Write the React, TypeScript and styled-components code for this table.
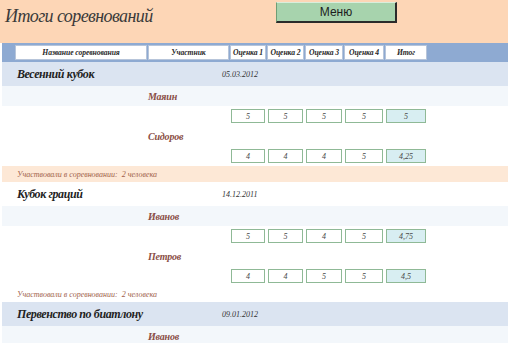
import React from "react";
import styled, { createGlobalStyle } from "styled-components";

const Global = createGlobalStyle`
  html, body { margin: 0; padding: 0; overflow: hidden; background: #ffffff; }
  body { font-family: "Liberation Serif", "Times New Roman", serif; }
`;

const COLS = "132px 81px 36px 37px 38px 40px 42px";
const SERIF = `"Liberation Serif", "Times New Roman", serif`;

const Page = styled.div`
  width: 508px;
  height: 343px;
  overflow: hidden;
  font-family: ${SERIF};
`;

const TitleBar = styled.div`
  height: 43px;
  background: #fdd6b6;
  display: flex;
  align-items: flex-start;
`;

const Title = styled.h1`
  margin: 0;
  width: 271px;
  padding: 4px 0 0 5px;
  font-family: ${SERIF};
  font-style: italic;
  font-weight: normal;
  font-size: 18px;
  letter-spacing: -0.6px;
  line-height: 24px;
  color: #3a3a3a;
`;

const MenuButton = styled.button`
  margin-top: 2px;
  width: 121px;
  height: 21px;
  padding: 0;
  background: #a7d3ad;
  border-style: solid;
  border-width: 1px 2px 2px 1px;
  border-color: #d9eedc #2b2b2b #2b2b2b #6f9d75;
  font-family: "Liberation Sans", Arial, sans-serif;
  font-size: 12px;
  color: #1e1e1e;
`;

const HeaderBar = styled.div`
  margin-left: 2px;
  height: 19px;
  box-sizing: border-box;
  padding: 2px 0 2px 13px;
  background: #8eaad2;
  display: grid;
  grid-template-columns: ${COLS};
  column-gap: 1px;
`;

const HeaderCell = styled.div`
  box-sizing: border-box;
  background: #ffffff;
  border: 1px solid #b7c5da;
  display: flex;
  align-items: center;
  justify-content: center;
  font-family: ${SERIF};
  font-style: italic;
  font-weight: bold;
  font-size: 7.7px;
  letter-spacing: -0.1px;
  color: #2a2a2a;
  white-space: nowrap;
`;

const CompRow = styled.div<{ $shaded: boolean }>`
  margin-left: 2px;
  height: 24px;
  box-sizing: border-box;
  padding-left: 15px;
  background: ${(p) => (p.$shaded ? "#dbe4f1" : "#ffffff")};
  display: flex;
  align-items: center;
`;

const CompName = styled.div`
  width: 205px;
  font-family: ${SERIF};
  font-style: italic;
  font-weight: bold;
  font-size: 12px;
  letter-spacing: -0.4px;
  color: #222222;
  white-space: nowrap;
`;

const CompDate = styled.div`
  font-family: ${SERIF};
  font-style: italic;
  font-size: 8px;
  color: #333333;
`;

const NameRow = styled.div<{ $shaded: boolean }>`
  margin-left: 2px;
  height: 20px;
  box-sizing: border-box;
  padding-left: 146px;
  background: ${(p) => (p.$shaded ? "#f3f7fb" : "#ffffff")};
  display: flex;
  align-items: center;
  font-family: ${SERIF};
  font-style: italic;
  font-weight: bold;
  font-size: 10px;
  letter-spacing: -0.2px;
  color: #8a4e45;
`;

const ScoreRow = styled.div`
  margin-left: 2px;
  height: 20px;
  box-sizing: border-box;
  padding-left: 13px;
  display: grid;
  grid-template-columns: ${COLS};
  column-gap: 1px;
  align-items: center;
`;

const ScoreBox = styled.div<{ $col: number; $total?: boolean }>`
  grid-column: ${(p) => p.$col};
  height: 14px;
  box-sizing: border-box;
  margin: 0 1px;
  border: 1px solid #8fb996;
  background: ${(p) => (p.$total ? "#d8eef2" : "#ffffff")};
  display: flex;
  align-items: center;
  justify-content: center;
  font-family: ${SERIF};
  font-style: italic;
  font-size: 8px;
  color: #4a4a4a;
`;

const Footer = styled.div<{ $shaded: boolean }>`
  margin-left: 2px;
  height: 16px;
  box-sizing: border-box;
  padding-left: 15px;
  background: ${(p) => (p.$shaded ? "#fde8d6" : "#ffffff")};
  display: flex;
  align-items: center;
  font-family: ${SERIF};
  font-style: italic;
  font-size: 8px;
  color: #a0614a;
  white-space: pre;
`;

type Participant = { name: string; scores?: string[]; total?: string };
type Competition = {
  name: string;
  date: string;
  count: number;
  participants: Participant[];
};

const headers = [
  "Название соревнования",
  "Участник",
  "Оценка 1",
  "Оценка 2",
  "Оценка 3",
  "Оценка 4",
  "Итог",
];

const competitions: Competition[] = [
  {
    name: "Весенний кубок",
    date: "05.03.2012",
    count: 2,
    participants: [
      { name: "Маяин", scores: ["5", "5", "5", "5"], total: "5" },
      { name: "Сидоров", scores: ["4", "4", "4", "5"], total: "4,25" },
    ],
  },
  {
    name: "Кубок граций",
    date: "14.12.2011",
    count: 2,
    participants: [
      { name: "Иванов", scores: ["5", "5", "4", "5"], total: "4,75" },
      { name: "Петров", scores: ["4", "4", "5", "5"], total: "4,5" },
    ],
  },
  {
    name: "Первенство по биатлону",
    date: "09.01.2012",
    count: 0,
    participants: [{ name: "Иванов" }],
  },
];

export default function App() {
  return (
    <Page>
      <Global />
      <TitleBar>
        <Title>Итоги соревнований</Title>
        <MenuButton>Меню</MenuButton>
      </TitleBar>
      <HeaderBar>
        {headers.map((h) => (
          <HeaderCell key={h}>{h}</HeaderCell>
        ))}
      </HeaderBar>
      {competitions.map((c, ci) => {
        const shaded = ci % 2 === 0;
        return (
          <React.Fragment key={c.name}>
            <CompRow $shaded={shaded}>
              <CompName>{c.name}</CompName>
              <CompDate>{c.date}</CompDate>
            </CompRow>
            {c.participants.map((p, pi) => (
              <React.Fragment key={p.name}>
                <NameRow $shaded={pi % 2 === 0}>{p.name}</NameRow>
                {p.scores && (
                  <ScoreRow>
                    {p.scores.map((s, si) => (
                      <ScoreBox key={si} $col={si + 3}>
                        {s}
                      </ScoreBox>
                    ))}
                    <ScoreBox $col={7} $total>
                      {p.total}
                    </ScoreBox>
                  </ScoreRow>
                )}
              </React.Fragment>
            ))}
            {c.count > 0 && (
              <Footer $shaded={shaded}>
                {`Участвовали в соревновании:  ${c.count} человека`}
              </Footer>
            )}
          </React.Fragment>
        );
      })}
    </Page>
  );
}
